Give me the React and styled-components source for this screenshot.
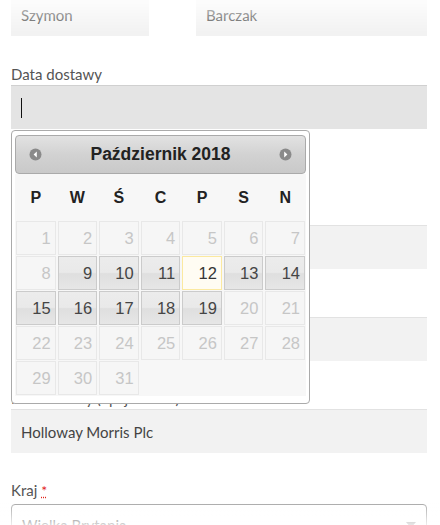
import styled, { createGlobalStyle } from "styled-components";

const GlobalStyle = createGlobalStyle`
  html, body {
    margin: 0;
    padding: 0;
    background: #fff;
    overflow: hidden;
  }
  body {
    font-family: Lato, "Open Sans", sans-serif;
  }
`;

const weekDays = ["P", "W", "Ś", "C", "P", "S", "N"];

// state of each day in Oct 2018: d = disabled, a = active, t = today
const weeks = [
  [1, 2, 3, 4, 5, 6, 7].map((n) => ({ n, s: "d" })),
  [
    { n: 8, s: "d" },
    { n: 9, s: "a" },
    { n: 10, s: "a" },
    { n: 11, s: "a" },
    { n: 12, s: "t" },
    { n: 13, s: "a" },
    { n: 14, s: "a" },
  ],
  [
    { n: 15, s: "a" },
    { n: 16, s: "a" },
    { n: 17, s: "a" },
    { n: 18, s: "a" },
    { n: 19, s: "a" },
    { n: 20, s: "d" },
    { n: 21, s: "d" },
  ],
  [22, 23, 24, 25, 26, 27, 28].map((n) => ({ n, s: "d" })),
  [29, 30, 31].map((n) => ({ n, s: "d" })),
];

function ArrowIcon({ dir }) {
  return (
    <svg width="13" height="13" viewBox="0 0 13 13">
      <circle cx="6.5" cy="6.5" r="6" fill="#8a8a8a" />
      {dir === "prev" ? (
        <path d="M7.8 3.6 L4.6 6.5 L7.8 9.4 Z" fill="#fff" />
      ) : (
        <path d="M5.2 3.6 L8.4 6.5 L5.2 9.4 Z" fill="#fff" />
      )}
    </svg>
  );
}

function App() {
  return (
    <>
      <GlobalStyle />
      <Page>
        <NameRow>
          <Field>
            <Input>Szymon</Input>
          </Field>
          <Field>
            <Input>Barczak</Input>
          </Field>
        </NameRow>

        <DateField>
          <Label>Data dostawy</Label>
          <Input focused>
            <Caret />
          </Input>
          <Hint>Wybierz dzień dostawy</Hint>

          <Picker>
            <PickerHeader>
              <NavBtn>
                <ArrowIcon dir="prev" />
              </NavBtn>
              <Title>Październik 2018</Title>
              <NavBtn>
                <ArrowIcon dir="next" />
              </NavBtn>
            </PickerHeader>
            <Calendar>
              <thead>
                <tr>
                  {weekDays.map((d, i) => (
                    <Th key={i}>{d}</Th>
                  ))}
                </tr>
              </thead>
              <tbody>
                {weeks.map((w, i) => (
                  <tr key={i}>
                    {w.map((day) => (
                      <Td key={day.n}>
                        <Day state={day.s}>{day.n}</Day>
                      </Td>
                    ))}
                    {w.length < 7 && <td colSpan={7 - w.length} />}
                  </tr>
                ))}
              </tbody>
            </Calendar>
          </Picker>
        </DateField>

        <Field>
          <Label>Godzina dostawy</Label>
          <Input />
        </Field>
        <Field>
          <Label>Uwagi do zamówienia</Label>
          <Input />
        </Field>
        <Field>
          <Label>Nazwa firmy (opcjonalnie)</Label>
          <Input>Holloway Morris Plc</Input>
        </Field>
        <Field>
          <Label>
            Kraj <Required title="wymagane">*</Required>
          </Label>
          <Select>
            <span>Wielka Brytania</span>
            <SelectArrow />
          </Select>
        </Field>
      </Page>
      <FadeTop />
      <FadeBottom />
    </>
  );
}

const Page = styled.div`
  position: relative;
  margin-top: -8px;
  padding: 0 13px 0 11px;
  display: flex;
  flex-direction: column;
`;

const NameRow = styled.div`
  display: grid;
  grid-template-columns: 138px 1fr;
  column-gap: 47px;
  margin-bottom: 27px;
`;

const Field = styled.div`
  display: flex;
  flex-direction: column;
  margin-bottom: 26px;

  ${NameRow} & {
    margin-bottom: 0;
  }
`;

const DateField = styled(Field)`
  position: relative;
`;

const Label = styled.label`
  font-size: 15px;
  line-height: 22px;
  color: #555;
`;

const Input = styled.div`
  box-sizing: border-box;
  height: 44px;
  display: flex;
  align-items: center;
  padding: 0 10px;
  font-size: 15px;
  color: #444;
  background: ${(p) => (p.focused ? "#e4e4e4" : "#f2f2f2")};
  border-top: 1px solid ${(p) => (p.focused ? "#d0d0d0" : "#e2e2e2")};
`;

const Caret = styled.span`
  width: 1px;
  height: 20px;
  background: #111;
`;

const Hint = styled.p`
  margin: 0;
  height: 48px;
  font-size: 14px;
  line-height: 48px;
  color: #888;
`;

const Required = styled.abbr`
  color: #e2231a;
  font-size: 14px;
  text-decoration: underline dotted #e2231a;
  cursor: help;
`;

const Select = styled.div`
  box-sizing: border-box;
  height: 42px;
  margin-top: 2px;
  border: 1px solid #aaa;
  border-radius: 4px;
  display: flex;
  align-items: center;
  justify-content: space-between;
  padding: 0 10px;
  font-size: 15px;
  color: #444;
`;

const SelectArrow = styled.span`
  width: 0;
  height: 0;
  border-left: 5px solid transparent;
  border-right: 5px solid transparent;
  border-top: 6px solid #888;
`;

const Picker = styled.div`
  position: absolute;
  top: 67px;
  left: 0;
  z-index: 5;
  box-sizing: border-box;
  width: 299px;
  padding: 4px 3px 7px;
  border: 1px solid #aaa;
  border-radius: 4px;
  background: #fff;
  font-family: "Liberation Sans", Arial, sans-serif;
`;

const PickerHeader = styled.div`
  box-sizing: border-box;
  height: 39px;
  display: flex;
  align-items: center;
  justify-content: space-between;
  padding: 0 13px;
  border: 1px solid #aaa;
  border-radius: 4px;
  background: linear-gradient(#e2e2e2, #d2d2d2 50%, #c9c9c9);
`;

const NavBtn = styled.span`
  display: flex;
  width: 13px;
  height: 13px;
`;

const Title = styled.span`
  font-size: 17.5px;
  font-weight: bold;
  color: #222;
`;

const Calendar = styled.table`
  width: 100%;
  border-collapse: collapse;
  table-layout: fixed;
  background: #f7f7f7;
`;

const Th = styled.th`
  height: 47px;
  padding: 0;
  font-size: 16px;
  font-weight: bold;
  color: #222;
  text-align: center;
`;

const Td = styled.td`
  padding: 0 1px 1px;
`;

const dayStyles = {
  d: `
    color: #c6c6c6;
    background: #f6f6f6;
    border-color: #e8e8e8;
  `,
  a: `
    color: #454545;
    background: linear-gradient(#ececec, #e9e9e9 48%, #dfdfdf 52%, #e6e6e6);
    border-color: #cbcbcb;
  `,
  t: `
    color: #363636;
    background: #fffcf3;
    border-color: #fbe9a0;
  `,
};

const Day = styled.a`
  display: block;
  box-sizing: border-box;
  height: 34px;
  padding: 0 4px;
  border: 1px solid;
  font-size: 16.5px;
  line-height: 32px;
  text-align: right;
  ${(p) => dayStyles[p.state]}
`;

const FadeTop = styled.div`
  position: fixed;
  top: 0;
  left: 0;
  right: 0;
  height: 34px;
  pointer-events: none;
  background: linear-gradient(rgba(255, 255, 255, 0.8), rgba(255, 255, 255, 0));
`;

const FadeBottom = styled.div`
  position: fixed;
  bottom: 0;
  left: 0;
  right: 0;
  height: 22px;
  pointer-events: none;
  background: linear-gradient(rgba(255, 255, 255, 0), rgba(255, 255, 255, 0.8));
`;

export default App;
